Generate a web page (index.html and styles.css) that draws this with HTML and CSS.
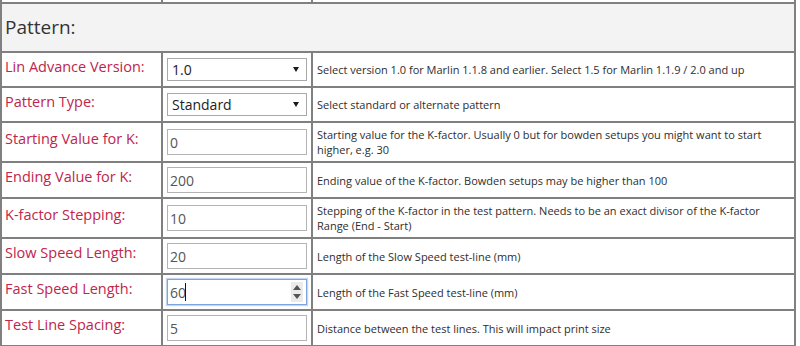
FILE: index.html
```html
<!DOCTYPE html>
<html lang="en">
<head>
  <meta charset="UTF-8">
  <meta name="viewport" content="width=device-width, initial-scale=1.0">
  <title>K-Factor Pattern Settings</title>
  <link rel="stylesheet" href="styles.css">
</head>
<body>
  <table class="settings">
    <tr class="cut-row">
      <td class="col-label"></td>
      <td class="col-field"></td>
      <td class="col-desc"></td>
    </tr>
    <tr class="section">
      <th colspan="3">Pattern:</th>
    </tr>
    <tr class="row-select">
      <td class="label">Lin Advance Version:</td>
      <td class="field">
        <span class="select-wrap">
          <select>
            <option selected>1.0</option>
            <option>1.5</option>
          </select>
        </span>
      </td>
      <td class="desc">Select version 1.0 for Marlin 1.1.8 and earlier. Select 1.5 for Marlin 1.1.9 / 2.0 and up</td>
    </tr>
    <tr class="row-select">
      <td class="label">Pattern Type:</td>
      <td class="field">
        <span class="select-wrap">
          <select>
            <option selected>Standard</option>
            <option>Alternate</option>
          </select>
        </span>
      </td>
      <td class="desc">Select standard or alternate pattern</td>
    </tr>
    <tr>
      <td class="label">Starting Value for K:</td>
      <td class="field"><input type="text" value="0"></td>
      <td class="desc">Starting value for the K-factor. Usually 0 but for bowden setups you might want to start higher, e.g. 30</td>
    </tr>
    <tr>
      <td class="label">Ending Value for K:</td>
      <td class="field"><input type="text" value="200"></td>
      <td class="desc">Ending value of the K-factor. Bowden setups may be higher than 100</td>
    </tr>
    <tr>
      <td class="label">K-factor Stepping:</td>
      <td class="field"><input type="text" value="10"></td>
      <td class="desc">Stepping of the K-factor in the test pattern. Needs to be an exact divisor of the K-factor Range (End - Start)</td>
    </tr>
    <tr>
      <td class="label">Slow Speed Length:</td>
      <td class="field"><input type="text" value="20"></td>
      <td class="desc">Length of the Slow Speed test-line (mm)</td>
    </tr>
    <tr>
      <td class="label">Fast Speed Length:</td>
      <td class="field">
        <span class="number-wrap">
          <input type="text" class="focused" value="60">
          <span class="caret"></span>
          <span class="spinner"><i class="up"></i><i class="down"></i></span>
        </span>
      </td>
      <td class="desc">Length of the Fast Speed test-line (mm)</td>
    </tr>
    <tr>
      <td class="label">Test Line Spacing:</td>
      <td class="field"><input type="text" value="5"></td>
      <td class="desc">Distance between the test lines. This will impact print size</td>
    </tr>
  </table>
</body>
</html>
```

FILE: styles.css
```css
body {
  margin: 0;
  background: #fff;
  font-family: "Open Sans", Arial, sans-serif;
  color: #333;
}
.settings {
  width: 796px;
  table-layout: fixed;
  border-collapse: separate;
  border-spacing: 0;
  border-left: 2px solid #808080;
}
.settings td,
.settings th {
  box-sizing: border-box;
  border-right: 2px solid #808080;
  border-bottom: 2px solid #808080;
  padding: 4px;
  vertical-align: middle;
}
.col-label {
  width: 161px;
}
.col-field {
  width: 150px;
}
.col-desc {
  width: 483px;
}
.settings .cut-row td {
  height: 4px;
  padding: 0;
}
.settings .section th {
  height: 49px;
  background: #f3f3f3;
  font-size: 19px;
  font-weight: normal;
  text-align: left;
  padding: 0 3px 1px;
}
.settings .row-select td {
  height: 35px;
}
.settings .label {
  color: #c0254d;
  font-size: 14.5px;
  line-height: 20px;
  padding: 0 3px 6px;
}
.settings .desc {
  font-size: 11px;
  line-height: 15px;
  color: #2e2e2e;
}
.field input,
.field select {
  box-sizing: border-box;
  width: 140px;
  margin: 0;
  font-family: "Open Sans", Arial, sans-serif;
  font-size: 14px;
  color: #555;
  background: #fff;
  border: 1px solid #b4b4b4;
  outline: none;
}
.field input {
  display: block;
  height: 26px;
  padding: 0 2px;
}
.field select {
  display: block;
  height: 23px;
  padding: 0 4px;
  border-color: #a9a9a9;
  appearance: none;
  -webkit-appearance: none;
  color: #222;
}
.select-wrap,
.number-wrap {
  position: relative;
  display: block;
  width: 140px;
}
.select-wrap::after {
  content: "";
  position: absolute;
  right: 8px;
  top: 9px;
  border-left: 3.5px solid transparent;
  border-right: 3.5px solid transparent;
  border-top: 5px solid #1a1a1a;
  pointer-events: none;
}
.field input.focused {
  border-color: #7ba4e0;
  box-shadow: 0 0 1px 1px #c3d7f3;
}
.caret {
  position: absolute;
  left: 18px;
  top: 4px;
  width: 1px;
  height: 18px;
  background: #111;
}
.spinner {
  position: absolute;
  right: 4px;
  top: 3px;
  width: 12px;
  height: 20px;
  background: #ebebeb;
}
.spinner i {
  position: absolute;
  left: 2px;
  border-left: 4px solid transparent;
  border-right: 4px solid transparent;
}
.spinner .up {
  top: 3px;
  border-bottom: 5px solid #555;
}
.spinner .down {
  bottom: 3px;
  border-top: 5px solid #555;
}
```
